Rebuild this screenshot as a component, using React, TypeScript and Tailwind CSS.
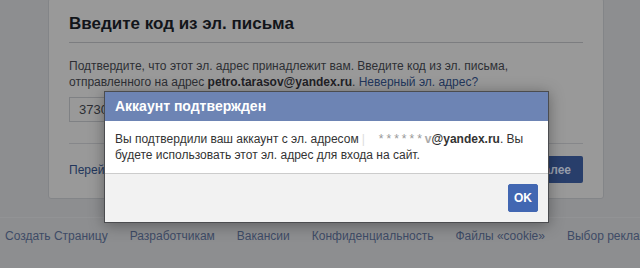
import React from 'react';

const footerLinks = [
  'Создать Страницу',
  'Разработчикам',
  'Вакансии',
  'Конфиденциальность',
  'Файлы «cookie»',
  'Выбор рекламы',
];

const App: React.FC = () => {
  return (
    <div className="relative h-[268px] w-[640px] overflow-hidden bg-[#8d8e90] font-['Liberation_Sans',Arial,sans-serif]">
      {/* page card behind the dialog */}
      <div className="ml-[48px] -mt-[2px] w-[556px] rounded-[3px] border border-[#838588] bg-[#999999] px-[20px]">
        <h2 className="border-b border-[#7c7d80] pt-[15px] pb-[8px] text-[17px] font-bold leading-[20px] text-[#12151a]">
          Введите код из эл. письма
        </h2>
        <p className="mt-[15px] text-[12px] leading-[16px] text-[#2d2f34]">
          Подтвердите, что этот эл. адрес принадлежит вам. Введите код из эл. письма,
          <br />
          отправленного на адрес <span className="font-bold text-[#1f2126]">petro.tarasov@yandex.ru</span>.{' '}
          <span className="text-[#22365c]">Неверный эл. адрес?</span>
        </p>
        <div className="mt-[7px] flex h-[25px] w-[180px] items-center border border-[#7f8184] px-[9px] text-[13px] text-[#2d2f34]">
          37304
        </div>
        <div className="mt-[21px] flex items-center justify-between border-t border-[#86878a] pt-[12px] pb-[15px]">
          <span className="text-[12px] text-[#22365c]">Перейти назад</span>
          <div className="flex h-[27px] items-center rounded-[2px] bg-[#283e6b] px-[12px] text-[12px] font-bold text-[#979dab]">
            Далее
          </div>
        </div>
      </div>

      {/* page footer */}
      <div className="mt-[18px] border-t border-[#929395] pt-[10px]">
        <div className="flex gap-[22px] pl-[5px] text-[12px] leading-[16px] text-[#3e4b66] whitespace-nowrap">
          {footerLinks.map((l) => (
            <span key={l}>{l}</span>
          ))}
        </div>
      </div>

      {/* dialog */}
      <div className="absolute left-[104px] top-[91px] w-[445px] border border-[#4b4c4f] shadow-[0_2px_14px_rgba(0,0,0,0.35)]">
        <div className="flex h-[29px] items-center bg-[#6d84b4] px-[10px] text-[14px] font-bold text-white">
          Аккаунт подтвержден
        </div>
        <div className="bg-white px-[10px] py-[10px] text-[12px] leading-[16px] text-[#333333]">
          Вы подтвердили ваш аккаунт с эл. адресом
          <span className="ml-[3px] text-[#dddddd]">|</span>
          <span className="ml-[14px] tracking-[3px] text-[#999999]">******</span>
          <span className="font-bold">
            <span className="text-[#aaaaaa]">v</span>@yandex.ru
          </span>
          . Вы будете использовать этот эл. адрес для входа на сайт.
        </div>
        <div className="flex justify-end border-t border-[#cccccc] bg-[#f2f2f2] p-[10px]">
          <div className="flex h-[28px] w-[30px] items-center justify-center rounded-[2px] border border-[#4267b2] bg-[#4267b2] text-[12px] font-bold text-white">
            OK
          </div>
        </div>
      </div>
    </div>
  );
};

export default App;
